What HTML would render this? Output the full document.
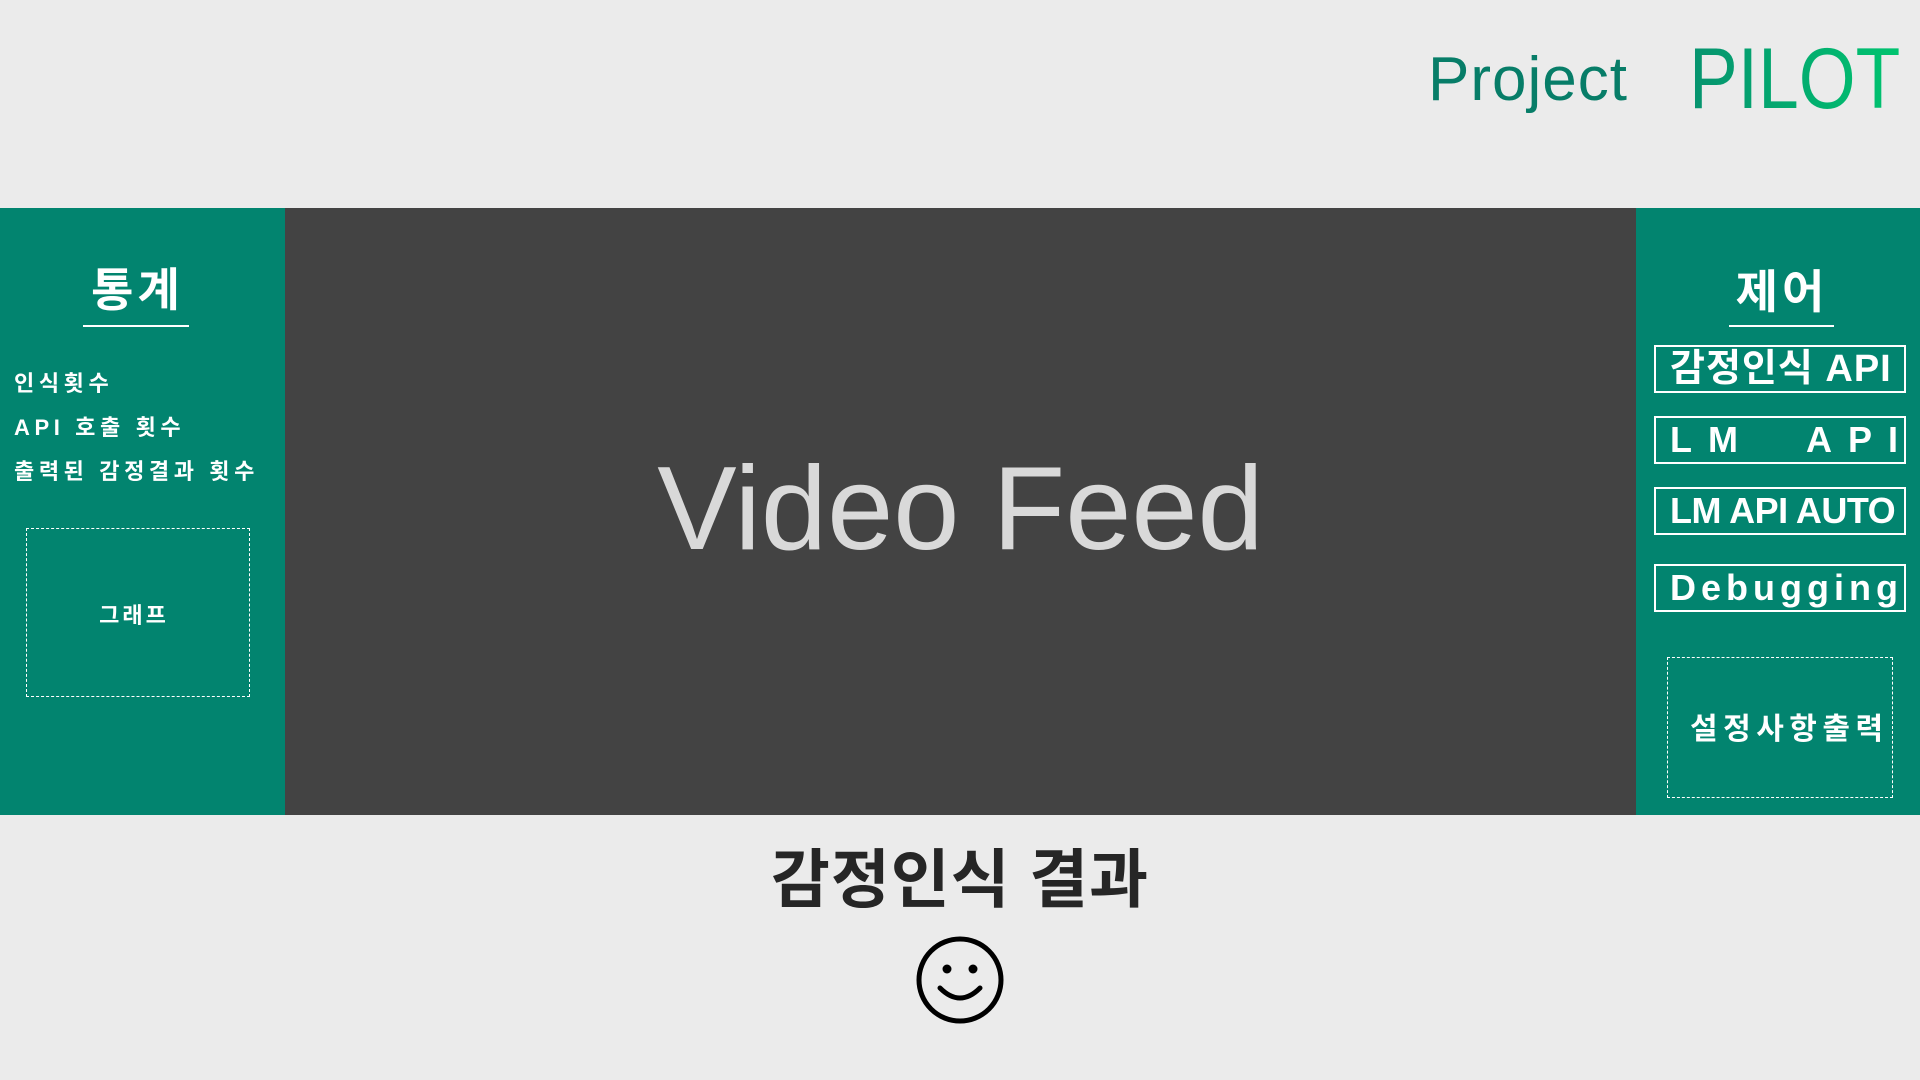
<!DOCTYPE html>
<html><head><meta charset="utf-8"><style>
*{margin:0;padding:0;box-sizing:border-box}
body{width:1920px;height:1080px;background:#ebebeb;position:relative;overflow:hidden;font-family:"Liberation Sans","Noto Sans CJK KR",sans-serif}
.a{position:absolute}
.g{background:#02846f}
.w{color:#fff}
.btn{position:absolute;left:1654px;width:252px;height:48px;border:2px solid #fff;color:#fff;font-weight:bold;font-size:36px;line-height:44px;white-space:nowrap;padding-left:14px}
</style></head><body>
<div class="a" style="left:1428px;top:44px;font-size:62px;color:#077d68;letter-spacing:1px;">Project</div>
<div class="a" style="left:1689px;top:30px;font-size:86px;letter-spacing:0px;transform:scaleX(0.85);transform-origin:left top;background:linear-gradient(90deg,#06936f,#00c46f);-webkit-background-clip:text;color:transparent;white-space:nowrap">PILOT</div>

<div class="a g" style="left:0;top:208px;width:285px;height:607px"></div>
<div class="a" style="left:285px;top:208px;width:1351px;height:607px;background:#434343"></div>
<div class="a g" style="left:1636px;top:208px;width:284px;height:607px"></div>

<div class="a w" style="left:0;width:275px;top:254px;text-align:center;font-size:46px;font-weight:bold;letter-spacing:4px">통계</div>
<div class="a" style="left:83px;top:325px;width:106px;height:2px;background:#fff"></div>
<div class="a w" style="left:14px;top:362px;font-size:22px;font-weight:bold;letter-spacing:4.6px;line-height:44px;white-space:nowrap">인식횟수<br>API 호출 횟수<br>출력된 감정결과 횟수</div>
<div class="a" style="left:26px;top:528px;width:224px;height:169px;border:1px dashed #fff"></div>
<div class="a w" style="left:22px;width:224px;top:598px;text-align:center;font-size:22px;font-weight:bold;letter-spacing:3px">그래프</div>

<div class="a" style="left:285px;width:1351px;top:440px;text-align:center;font-size:119px;color:#d9d9d9;letter-spacing:0px">Video Feed</div>

<div class="a w" style="left:1700px;width:164px;top:256px;text-align:center;font-size:46px;font-weight:bold;letter-spacing:4px">제어</div>
<div class="a" style="left:1729px;top:325px;width:105px;height:2px;background:#fff"></div>
<div class="btn" style="top:345px;letter-spacing:1px;font-size:38px">감정인식 API</div>
<div class="btn" style="top:416px;letter-spacing:16px">LM&nbsp;&nbsp;API</div>
<div class="btn" style="top:487px;letter-spacing:-0.5px">LM API AUTO</div>
<div class="btn" style="top:564px;letter-spacing:5px">Debugging</div>
<div class="a" style="left:1667px;top:657px;width:226px;height:141px;border:1px dashed #fff"></div>
<div class="a w" style="left:1690px;top:704px;font-size:30px;font-weight:bold;letter-spacing:5.5px;white-space:nowrap">설정사항출력</div>

<div class="a" style="left:0;width:1920px;top:829px;text-align:center;font-size:64px;font-weight:bold;color:#262626;letter-spacing:1px">감정인식 결과</div>
<svg class="a" style="left:914px;top:934px" width="92" height="92" viewBox="0 0 92 92">
<circle cx="46" cy="46" r="41" fill="none" stroke="#000" stroke-width="5"/>
<circle cx="33" cy="35" r="4.5"/><circle cx="59" cy="35" r="4.5"/>
<path d="M26 54 Q46 74 66 54" fill="none" stroke="#000" stroke-width="5" stroke-linecap="round"/>
</svg>
</body></html>
